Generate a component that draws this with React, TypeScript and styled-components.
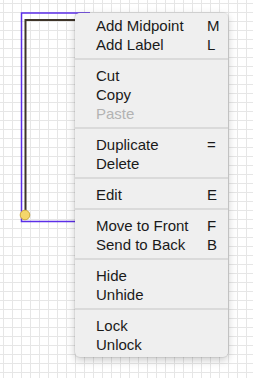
import styled, { createGlobalStyle } from "styled-components";

const GlobalStyle = createGlobalStyle`
  html, body {
    margin: 0;
    padding: 0;
    background: #ffffff;
  }
`;

const Canvas = styled.div`
  position: relative;
  width: 253px;
  height: 378px;
  overflow: hidden;
  background-color: #ffffff;
  background-image:
    linear-gradient(to right, #e6e6e6 1px, transparent 1px),
    linear-gradient(to bottom, #e6e6e6 1px, transparent 1px);
  background-size: 9px 9px;
  background-position: 3px 3px;
`;

const Diagram = styled.svg`
  position: absolute;
  left: 0;
  top: 0;
`;

const Menu = styled.div`
  position: absolute;
  left: 75px;
  top: 13px;
  width: 153px;
  box-sizing: border-box;
  padding: 2px 0 4px;
  display: flex;
  flex-direction: column;
  background: #efefef;
  border-radius: 5px;
  box-shadow: 0 0 0 1px rgba(0, 0, 0, 0.06), 0 3px 8px rgba(0, 0, 0, 0.22);
  font-family: "Liberation Sans", Arial, sans-serif;
  font-size: 15px;
`;

const Item = styled.div<{ $disabled?: boolean }>`
  display: flex;
  align-items: center;
  height: 19px;
  line-height: 19px;
  padding-left: 21px;
  padding-top: 1px;
  box-sizing: border-box;
  color: ${(p) => (p.$disabled ? "#b3b3b3" : "#1a1a1a")};
`;

const Label = styled.span`
  flex: 1;
`;

const Shortcut = styled.span`
  width: 21px;
`;

const Separator = styled.div`
  height: 12px;
  display: flex;
  align-items: center;

  &::after {
    content: "";
    flex: 1;
    height: 2px;
    background: #dadada;
  }
`;

type Entry = { label: string; key?: string; disabled?: boolean } | "sep";

const entries: Entry[] = [
  { label: "Add Midpoint", key: "M" },
  { label: "Add Label", key: "L" },
  "sep",
  { label: "Cut" },
  { label: "Copy" },
  { label: "Paste", disabled: true },
  "sep",
  { label: "Duplicate", key: "=" },
  { label: "Delete" },
  "sep",
  { label: "Edit", key: "E" },
  "sep",
  { label: "Move to Front", key: "F" },
  { label: "Send to Back", key: "B" },
  "sep",
  { label: "Hide" },
  { label: "Unhide" },
  "sep",
  { label: "Lock" },
  { label: "Unlock" },
];

export default function App() {
  return (
    <>
      <GlobalStyle />
      <Canvas>
        <Diagram width="253" height="378" viewBox="0 0 253 378">
          <polyline
            points="90,13 21.5,13 21.5,221.5 90,221.5"
            fill="none"
            stroke="#5b2ee8"
            strokeWidth="1.5"
          />
          <polyline
            points="90,20 25.5,20 25.5,210"
            fill="none"
            stroke="#3d3428"
            strokeWidth="2"
          />
          <circle cx="25" cy="215" r="4.8" fill="#f4d66b" stroke="#c9a93e" strokeWidth="1" />
        </Diagram>
        <Menu>
          {entries.map((e, i) =>
            e === "sep" ? (
              <Separator key={i} />
            ) : (
              <Item key={i} $disabled={e.disabled}>
                <Label>{e.label}</Label>
                <Shortcut>{e.key}</Shortcut>
              </Item>
            )
          )}
        </Menu>
      </Canvas>
    </>
  );
}
